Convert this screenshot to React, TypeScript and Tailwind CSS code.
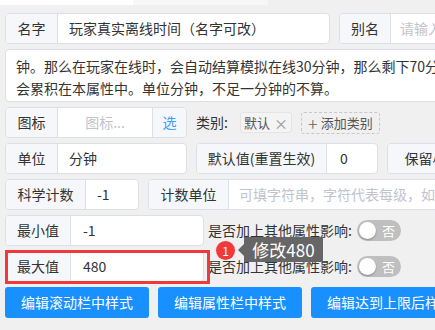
import React from 'react'

const font = '"Noto Sans CJK SC", "Liberation Sans", sans-serif'

function Label({ w, children }: { w: string; children: React.ReactNode }) {
  return (
    <div className={`${w} shrink-0 h-full flex items-center justify-center bg-[#f5f7fa] border-r border-[#dcdfe6] text-[#333] whitespace-nowrap`}>
      {children}
    </div>
  )
}

function Group({ w, children }: { w: string; children: React.ReactNode }) {
  return (
    <div className={`${w} shrink-0 h-full flex border border-[#dcdfe6] rounded-[4px] overflow-hidden bg-white`}>
      {children}
    </div>
  )
}

function Switch() {
  return (
    <div className="ml-[5px] shrink-0 w-[44px] h-[21px] rounded-full bg-[#bfbfbf] flex items-center pl-[2px] relative">
      <div className="w-[17px] h-[17px] rounded-full bg-white shadow-[0_1px_2px_rgba(0,0,0,0.3)]"></div>
      <span className="ml-[6px] text-white text-[13px] leading-none">否</span>
    </div>
  )
}

export default function App() {
  return (
    <div className="w-[435px] h-[330px] overflow-hidden bg-[#f0f0f0] relative text-[14px]" style={{ fontFamily: font }}>
      {/* 顶部残留 */}
      <div className="flex h-[5px]">
        <div className="w-[133px] bg-white"></div>
        <div className="w-[135px] bg-[#f7f7f7]"></div>
      </div>

      <div className="flex flex-col gap-[5px] pt-[8px] pl-[5px]">
        {/* 名字 / 别名 */}
        <div className="flex h-[31px] gap-[9px]">
          <Group w="w-[325px]">
            <Label w="w-[52px]">名字</Label>
            <div className="flex items-center pl-[11px] text-[#333] whitespace-nowrap">玩家真实离线时间（名字可改）</div>
          </Group>
          <Group w="w-[200px]">
            <Label w="w-[51px]">别名</Label>
            <div className="flex items-center pl-[9px] text-[#c0c4cc] whitespace-nowrap">请输入别名</div>
          </Group>
        </div>

        {/* 描述 */}
        <div className="w-[460px] h-[53px] shrink-0 border border-[#dcdfe6] rounded-[4px] bg-white pl-[10px] pt-[5px] text-[#333] leading-[22px] whitespace-nowrap overflow-hidden">
          <div>钟。那么在玩家在线时，会自动结算模拟在线30分钟，那么剩下70分钟</div>
          <div>会累积在本属性中。单位分钟，不足一分钟的不算。</div>
        </div>

        {/* 图标 / 类别 */}
        <div className="flex h-[31px] items-center">
          <Group w="w-[182px]">
            <Label w="w-[52px]">图标</Label>
            <div className="w-[94px] flex items-center justify-center text-[#c0c4cc]">图标...</div>
            <div className="flex-1 flex items-center justify-center bg-[#f5f7fa] border-l border-[#dcdfe6] text-[#409eff]">选</div>
          </Group>
          <span className="ml-[9px] text-[#333] whitespace-nowrap">类别:</span>
          <div className="ml-[12px] h-[21px] w-[52px] flex items-center justify-center gap-[4px] bg-[#f4f4f5] border border-[#e4e4e7] rounded-[3px] text-[13px] text-[#555]">
            默认<span className="text-[#999] text-[14px] leading-none">×</span>
          </div>
          <div className="ml-[9px] h-[22px] w-[79px] flex items-center justify-center gap-[3px] border border-dashed border-[#c8c8c8] rounded-[3px] text-[13px] text-[#555]">
            <span className="text-[18px] font-light leading-none text-[#666]">+</span>添加类别
          </div>
        </div>

        {/* 单位 / 默认值 / 保留小数 */}
        <div className="flex h-[31px] gap-[9px]">
          <Group w="w-[182px]">
            <Label w="w-[52px]">单位</Label>
            <div className="flex items-center pl-[11px] text-[#333]">分钟</div>
          </Group>
          <Group w="w-[182px]">
            <Label w="w-[130px]">默认值(重置生效)</Label>
            <div className="flex items-center pl-[13px] text-[#333]">0</div>
          </Group>
          <Group w="w-[140px]">
            <Label w="w-[90px]">保留小数</Label>
            <div></div>
          </Group>
        </div>

        {/* 科学计数 / 计数单位 */}
        <div className="flex h-[31px] gap-[9px]">
          <Group w="w-[134px]">
            <Label w="w-[80px]">科学计数</Label>
            <div className="flex items-center pl-[11px] text-[#333]">-1</div>
          </Group>
          <Group w="w-[320px]">
            <Label w="w-[80px]">计数单位</Label>
            <div className="flex items-center pl-[10px] text-[#c0c4cc] whitespace-nowrap">可填字符串，字符代表每级，如万亿</div>
          </Group>
        </div>

        {/* 最小值 */}
        <div className="flex h-[31px] items-center">
          <Group w="w-[199px]">
            <Label w="w-[65px]">最小值</Label>
            <div className="flex items-center pl-[12px] text-[#333]">-1</div>
          </Group>
          <span className="ml-[4px] text-[#333] whitespace-nowrap">是否加上其他属性影响:</span>
          <Switch />
        </div>

        {/* 最大值 */}
        <div className="flex h-[31px] items-center">
          <Group w="w-[199px]">
            <Label w="w-[65px]">最大值</Label>
            <div className="flex items-center pl-[12px] text-[#333]">480</div>
          </Group>
          <span className="ml-[4px] text-[#333] whitespace-nowrap">是否加上其他属性影响:</span>
          <Switch />
        </div>

        {/* 按钮 */}
        <div className="flex h-[31px] gap-[9px]">
          <button className="shrink-0 px-[16px] h-full rounded-[3px] bg-[#1890ff] text-white whitespace-nowrap">编辑滚动栏中样式</button>
          <button className="shrink-0 px-[16px] h-full rounded-[3px] bg-[#1890ff] text-white whitespace-nowrap">编辑属性栏中样式</button>
          <button className="shrink-0 px-[16px] h-full rounded-[3px] bg-[#1890ff] text-white whitespace-nowrap">编辑达到上限后样式</button>
        </div>
      </div>

      {/* 标注：红框 */}
      <div className="absolute left-[5px] top-[250px] w-[205px] h-[34px] border-[3px] border-[#f03a3a]"></div>

      {/* 标注：序号 */}
      <div className="absolute left-[216px] top-[241px] w-[19px] h-[19px] rounded-full bg-[#f03a3a] text-white text-[12px] leading-none flex items-center justify-center">1</div>

      {/* 标注：提示 */}
      <div className="absolute left-[244px] top-[237px] w-[79px] h-[25px] bg-[#666] text-white text-[17px] leading-none flex items-center justify-center">
        修改480
      </div>
      <div className="absolute left-[238px] top-[244px] w-0 h-0 border-y-[6px] border-y-transparent border-r-[6px] border-r-[#666]"></div>
    </div>
  )
}
